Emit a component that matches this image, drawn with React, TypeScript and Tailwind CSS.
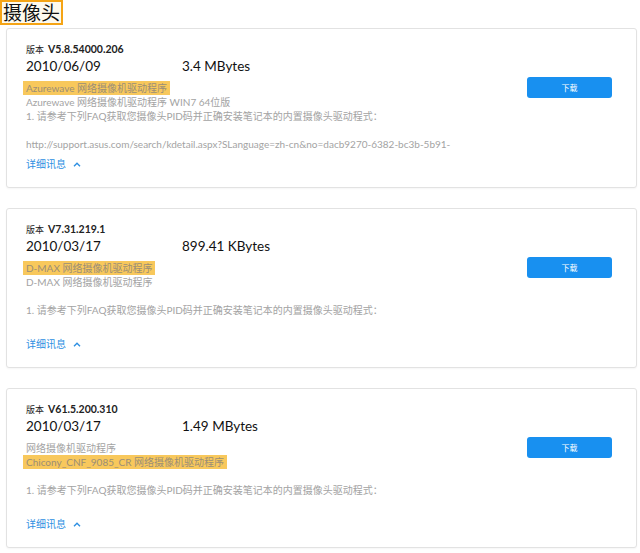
const FONT = "font-['Lato','Noto_Sans_CJK_SC',sans-serif]";

type Line = { text: string; mark?: boolean } | null;

type Driver = {
  version: string;
  date: string;
  size: string;
  lines: Line[];
};

const drivers: Driver[] = [
  {
    version: 'V5.8.54000.206',
    date: '2010/06/09',
    size: '3.4 MBytes',
    lines: [
      { text: 'Azurewave 网络摄像机驱动程序', mark: true },
      { text: 'Azurewave 网络摄像机驱动程序 WIN7 64位版' },
      { text: '1. 请参考下列FAQ获取您摄像头PID码并正确安装笔记本的内置摄像头驱动程式：' },
      null,
      { text: 'http://support.asus.com/search/kdetail.aspx?SLanguage=zh-cn&no=dacb9270-6382-bc3b-5b91-' },
    ],
  },
  {
    version: 'V7.31.219.1',
    date: '2010/03/17',
    size: '899.41 KBytes',
    lines: [
      { text: 'D-MAX 网络摄像机驱动程序', mark: true },
      { text: 'D-MAX 网络摄像机驱动程序' },
      null,
      { text: '1. 请参考下列FAQ获取您摄像头PID码并正确安装笔记本的内置摄像头驱动程式：' },
      null,
    ],
  },
  {
    version: 'V61.5.200.310',
    date: '2010/03/17',
    size: '1.49 MBytes',
    lines: [
      { text: '网络摄像机驱动程序' },
      { text: 'Chicony_CNF_9085_CR 网络摄像机驱动程序', mark: true },
      null,
      { text: '1. 请参考下列FAQ获取您摄像头PID码并正确安装笔记本的内置摄像头驱动程式：' },
      null,
    ],
  },
];

function DriverCard({ d }: { d: Driver }) {
  return (
    <div className="flex h-[160px] rounded-[3px] border border-[#e2e2e2] bg-white pl-[19px] pr-[24px] pt-[14px] shadow-[0_1px_2px_rgba(0,0,0,0.04)]">
      <div className="flex-1">
        <div className="flex h-[14px] items-center gap-[4px] text-[#222]">
          <span className="text-[9px]">版本</span>
          <span className="text-[10.5px] font-bold">{d.version}</span>
        </div>
        <div className="flex h-[19px] items-center text-[13.5px] text-[#111]">
          <span className="w-[156px]">{d.date}</span>
          <span>{d.size}</span>
        </div>
        <div className="mt-[5px] text-[10px] leading-[14px] text-[#a3a3a3]">
          {d.lines.map((l, i) =>
            l ? (
              <div key={i} className="h-[14px] whitespace-nowrap">
                {l.mark ? (
                  <span className="-ml-[3px] inline-block bg-[#f8c85c] pl-[3px] pr-[3px] text-[#9b8e77]">{l.text}</span>
                ) : (
                  l.text
                )}
              </div>
            ) : (
              <div key={i} className="h-[14px]" />
            ),
          )}
        </div>
        <div className="mt-[6px] flex h-[14px] items-center gap-[7px] text-[10px] text-[#2d8fe2]">
          <span>详细讯息</span>
          <svg width="8" height="5" viewBox="0 0 8 5" fill="none">
            <polyline points="1,4.2 4,1.2 7,4.2" stroke="#2d8fe2" strokeWidth="1.4" />
          </svg>
        </div>
      </div>
      <div className="pt-[34px]">
        <button className="flex h-[21px] w-[85px] items-center justify-center rounded-[3px] bg-[#1890f0] text-[8px] text-white">
          下载
        </button>
      </div>
    </div>
  );
}

export default function App() {
  return (
    <div className={`${FONT} min-h-[553px] w-[640px] bg-white`}>
      <div className="flex h-[25px] w-fit items-center border-2 border-[#f5a415] bg-[#fdf9ee] px-[1px] text-[19px] leading-none text-[#111]">
        摄像头
      </div>
      <div className="mt-[3px] flex flex-col gap-[20px] pl-[6px] pr-[3px]">
        {drivers.map((d) => (
          <DriverCard key={d.version} d={d} />
        ))}
      </div>
    </div>
  );
}
